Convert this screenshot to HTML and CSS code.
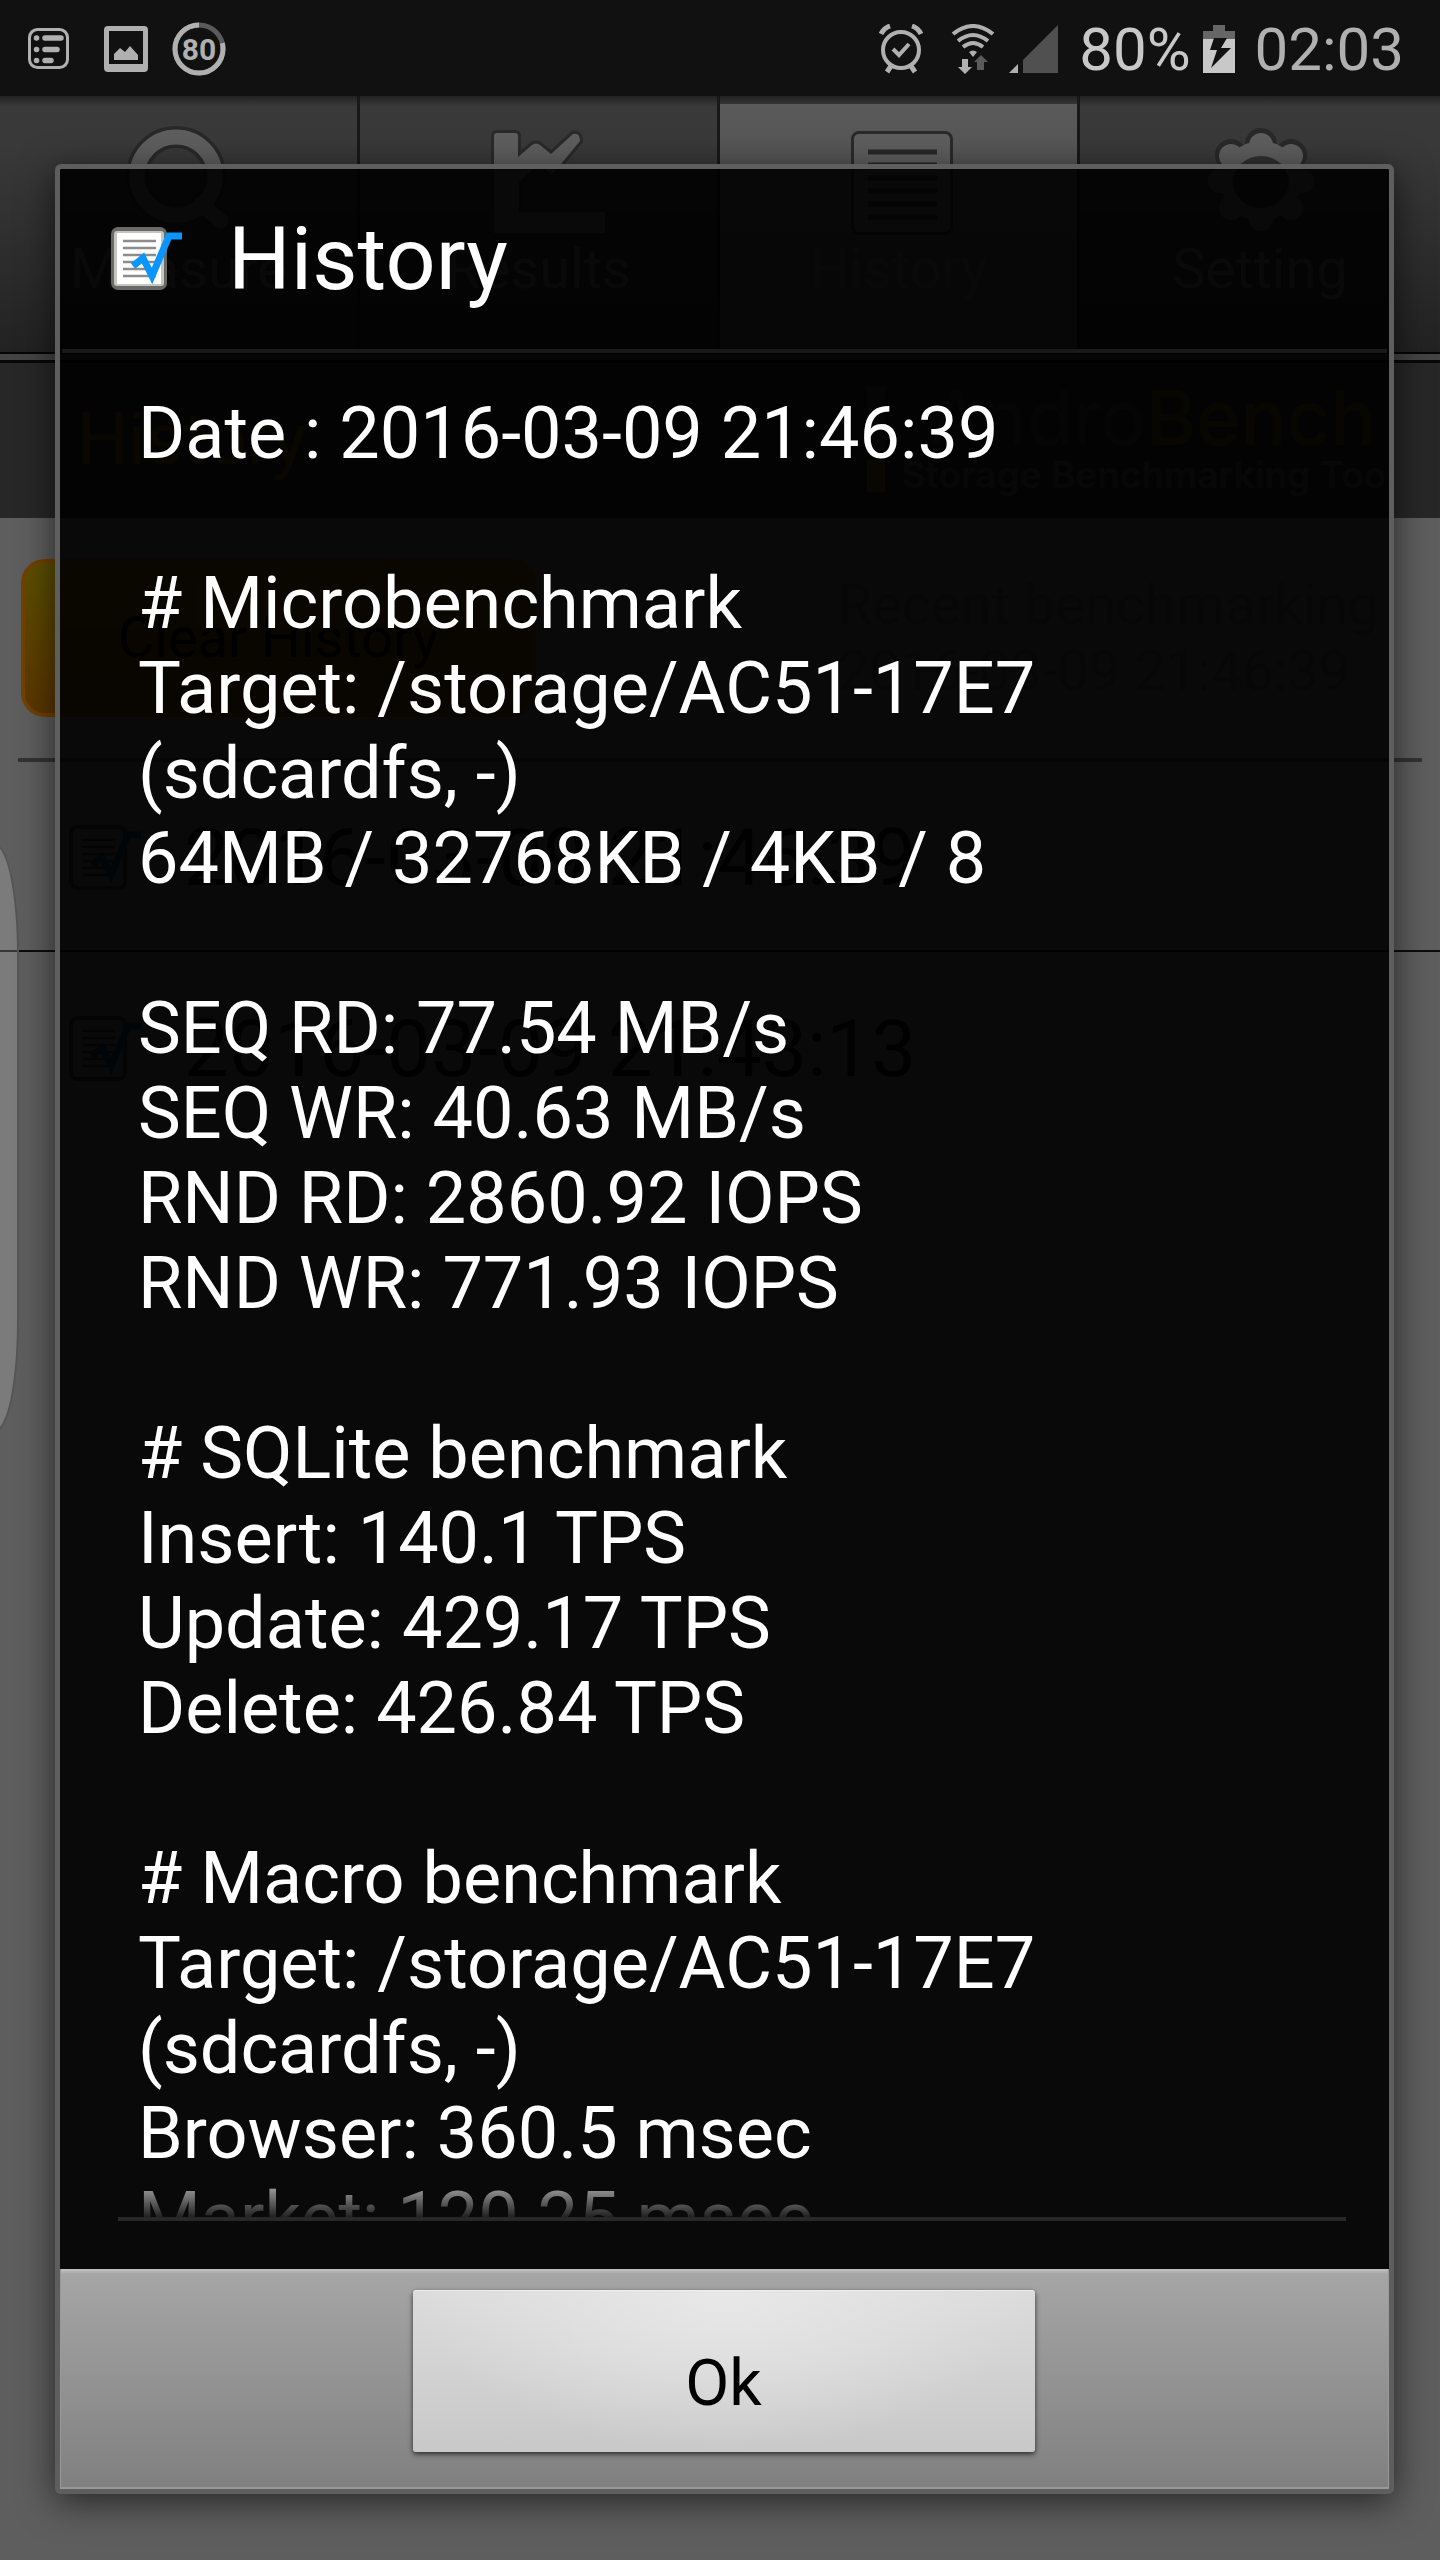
FILE: index.html
```
<!DOCTYPE html>
<html lang="en">
<head>
    <meta charset="UTF-8">
    <meta name="viewport" content="width=device-width, initial-scale=1.0">
    <title>AndroBench - History</title>
    <link rel="stylesheet" href="styles.css">
</head>
<body>
    <!-- shared icon: report sheet with tick -->
    <svg class="defs" width="0" height="0" aria-hidden="true">
        <symbol id="report" viewBox="0 0 72 66">
            <rect x="1" y="1" width="56" height="63" rx="7" fill="#6b6963"/>
            <rect x="4" y="5" width="50" height="55" rx="3" fill="#c4c4c4"/>
            <rect x="7" y="7" width="44" height="51" fill="#fff"/>
            <path d="M13 15h33M13 22h33M13 29h33M13 36h33M13 43h33M13 50h33" stroke="#8c8c8c" stroke-width="2.5"/>
            <path d="M23 40l10-8 9 18 17-40h13" fill="none" stroke="#0a95ff" stroke-width="7"/>
        </symbol>
        <symbol id="report-dim" viewBox="0 0 72 66">
            <rect x="2" y="2" width="54" height="61" rx="6" fill="#5e5e5e" stroke="#2c2c2c" stroke-width="4"/>
            <path d="M13 15h33M13 22h33M13 29h33M13 36h33M13 43h33M13 50h33" stroke="#303030" stroke-width="2.5"/>
            <path d="M23 40l10-8 9 18 17-40h13" fill="none" stroke="#00365c" stroke-width="7"/>
        </symbol>
    </svg>

    <header class="status-bar">
        <div class="status-left">
            <svg width="42" height="42" viewBox="0 0 42 42">
                <rect x="1.500" y="1.500" width="38" height="38" rx="8" fill="none" stroke="#b0b0b0" stroke-width="3"/>
                <g stroke="#b0b0b0" stroke-width="5.500" stroke-linecap="round">
                    <path d="M8.500 10h.1M17 10h16M8.500 21.500h.1M17 21.500h12M8.500 32.500h.1M17 32.500h6"/>
                </g>
            </svg>
            <svg width="44" height="46" viewBox="0 0 44 46">
                <path fill="#b0b0b0" fill-rule="evenodd" d="M4 0h36a4 4 0 0 1 4 4v38a4 4 0 0 1-4 4H4a4 4 0 0 1-4-4V4a4 4 0 0 1 4-4zM5 5v33h34V5z"/>
                <path fill="#b0b0b0" d="M10 34v-6l6-6 5 4 5-6 8 9v5z"/>
            </svg>
            <svg width="54" height="54" viewBox="0 0 54 54">
                <circle cx="27" cy="27" r="24" fill="none" stroke="#5a5a5a" stroke-width="5"/>
                <circle cx="27" cy="27" r="24" fill="none" stroke="#b0b0b0" stroke-width="5" pathLength="100" stroke-dasharray="79 21" stroke-dashoffset="-21" transform="rotate(-90 27 27)"/>
                <text x="27" y="38" class="ring-text">80</text>
            </svg>
        </div>
        <div class="status-right">
            <svg class="alarm" width="44" height="50" viewBox="0 0 44 50">
                <g fill="none" stroke="#b0b0b0">
                    <circle cx="22" cy="26" r="18" stroke-width="4"/>
                    <path d="M14 25l6 6 10-11" stroke-width="4"/>
                    <path d="M2 10q3-6 9-8M42 10q-3-6-9-8M12 42l-4 6M32 42l4 6" stroke-width="5"/>
                </g>
            </svg>
            <svg class="wifi" width="44" height="50" viewBox="0 0 44 50">
                <g fill="none" stroke="#b0b0b0" stroke-width="4">
                    <path d="M2 10q20-16 40 0M7 17q15-12 30 0M12 23q10-8 20 0"/>
                </g>
                <path d="M18 28q4-3 8 0l-4 5z" fill="#b0b0b0"/>
                <path d="M11 35h6v8h4l-7 7-7-7h4z" fill="#b0b0b0"/>
                <path d="M26 46h7v-8h4l-7-7-7 7h3z" fill="#5a5a5a"/>
            </svg>
            <svg class="signal" width="50" height="50" viewBox="0 0 50 50">
                <path d="M49 1v48H14V36z" fill="#505050"/>
                <path d="M9 40v9H0z" fill="#b0b0b0"/>
            </svg>
            <span class="percent">80%</span>
            <svg class="battery" width="32" height="50" viewBox="0 0 32 50">
                <path d="M10 1h12v6h10v8H0V7h10z" fill="#666"/>
                <path d="M0 15h32v34H0z" fill="#c8c8c8"/>
                <path d="M11 14h13l-6 10h10L8 44l6-18H7z" fill="#111"/>
            </svg>
            <time class="clock">02:03</time>
        </div>
    </header>

    <nav class="tabs">
        <button class="tab">
            <svg width="140" height="110" viewBox="0 0 140 110">
                <g class="icon-edge"><circle cx="67" cy="50" r="39"/><path d="M92 78l20 17"/></g>
                <g class="icon-line"><circle cx="67" cy="50" r="39"/><path d="M92 78l20 17"/></g>
            </svg>
            <span>Measure</span>
        </button>
        <button class="tab">
            <svg width="140" height="110" viewBox="0 0 140 110">
                <path class="icon-fill" d="M25 10q0-3 3-3h18q3 0 3 3v21l14-12q4-3 8 0l11 9 22-20q7-2 7 7L83 49 70 38 50 56v30h86v21H25z"/>
            </svg>
            <span>Results</span>
        </button>
        <button class="tab tab-active">
            <svg width="140" height="110" viewBox="0 0 140 110">
                <rect class="icon-fill" x="25" y="8" width="96" height="98" rx="5"/>
                <path d="M39 26h69M39 39h69M39 52h69M39 65h69M39 78h69M39 91h69" stroke="#282828" stroke-width="5"/>
            </svg>
            <span>History</span>
        </button>
        <button class="tab">
            <svg width="140" height="110" viewBox="0 0 140 110">
                <g class="icon-edge gear"><circle cx="71" cy="55" r="34"/><circle cx="71" cy="18" r="11"/><circle cx="101" cy="29" r="11"/><circle cx="41" cy="29" r="11"/></g>
                <g class="gear-fill">
                    <circle cx="71" cy="55" r="40"/>
                    <circle cx="71" cy="19" r="12"/><circle cx="101" cy="30" r="12"/><circle cx="112" cy="55" r="12"/><circle cx="101" cy="82" r="12"/>
                    <circle cx="71" cy="93" r="12"/><circle cx="41" cy="82" r="12"/><circle cx="30" cy="55" r="12"/><circle cx="41" cy="30" r="12"/>
                </g>
                <ellipse cx="71" cy="56" rx="28" ry="26" fill="#303030"/>
            </svg>
            <span>Setting</span>
        </button>
    </nav>

    <main class="page">
        <div class="page-head">
            <h1>History</h1>
            <div class="logo">
                <svg width="18" height="106" viewBox="0 0 18 106">
                    <path d="M0 0h18v68H0z" fill="#383838"/>
                    <path d="M0 74h18v32H0z" fill="#5e4600"/>
                </svg>
                <div>
                    <div class="logo-name">Andro<b>Bench</b></div>
                    <div class="logo-sub">Storage Benchmarking Tool</div>
                </div>
            </div>
        </div>
        <div class="toolbar">
            <button class="clear">Clear History</button>
            <p class="recent">Recent benchmarking<br>2016-03-09 21:46:39</p>
        </div>
        <ul class="runs">
            <li><svg width="72" height="66"><use href="#report-dim"/></svg>2016-03-09 21:46:39</li>
            <li><svg width="72" height="66"><use href="#report-dim"/></svg>2016-03-09 21:43:13</li>
        </ul>
    </main>

    <div class="edge-handle"></div>

    <div class="overlay">
        <section class="dialog" role="dialog" aria-labelledby="dialogTitle">
            <div class="dialog-title">
                <svg width="72" height="66"><use href="#report"/></svg>
                <h2 id="dialogTitle">History</h2>
            </div>
            <div class="dialog-body">
                <div class="report-text">Date : 2016-03-09 21:46:39

# Microbenchmark
Target: /storage/AC51-17E7 (sdcardfs, -)
64MB / 32768KB / 4KB / 8

SEQ RD: 77.54 MB/s
SEQ WR: 40.63 MB/s
RND RD: 2860.92 IOPS
RND WR: 771.93 IOPS

# SQLite benchmark
Insert: 140.1 TPS
Update: 429.17 TPS
Delete: 426.84 TPS

# Macro benchmark
Target: /storage/AC51-17E7 (sdcardfs, -)
Browser: 360.5 msec
Market: 120.25 msec</div>
            </div>
            <div class="dialog-buttons">
                <button class="ok">Ok</button>
            </div>
        </section>
    </div>
</body>
</html>
```
FILE: styles.css
```
* {
    box-sizing: border-box;
}

body {
    margin: 0;
    height: 100vh;
    overflow: hidden;
    position: relative;
    background: #5e5e5e;
    color: #000;
    font-family: Roboto, sans-serif;
}

button {
    border: 0;
    font-family: inherit;
    color: inherit;
}

svg {
    flex: none;
}

.defs {
    position: absolute;
}

/* status bar */
.status-bar {
    display: flex;
    justify-content: space-between;
    align-items: center;
    height: 96px;
    padding: 2px 36px 0 28px;
    background: #111;
}

.status-left,
.status-right {
    display: flex;
    align-items: center;
}

.status-left svg {
    margin-right: 24px;
}

.status-left svg:first-child {
    margin-right: 34px;
}

.ring-text {
    font-size: 30px;
    font-weight: 700;
    text-anchor: middle;
    fill: #b0b0b0;
}

.status-right {
    font-size: 60px;
    line-height: 70px;
    color: #b0b0b0;
}

.alarm {
    margin-right: 28px;
}

.wifi {
    margin-right: 14px;
}

.signal {
    margin-right: 20px;
}

.percent,
.clock {
    padding-top: 2px;
}

.percent {
    color: #c8c8c8;
}

.battery {
    margin: 0 20px 0 12px;
}

/* tabs */
.tabs {
    display: grid;
    grid-template-columns: repeat(4, 1fr);
    background: linear-gradient(#222 0, #393939 10px, #393939 50px, #222 100%);
    border-bottom: 2px solid #050505;
}

.tab {
    display: flex;
    flex-direction: column;
    align-items: center;
    padding: 30px 0 50px;
    background: none;
    border-right: 3px solid #181818;
    font-size: 56px;
    line-height: 66px;
    color: #5a5a5a;
}

.tab:last-child {
    border-right: 0;
}

.tab-active {
    background: linear-gradient(transparent 8px, #5a5a5a 8px, #444);
    color: #606060;
}

.icon-edge,
.icon-line {
    fill: none;
    stroke: #292929;
    stroke-width: 22;
    stroke-linecap: round;
}

.icon-line {
    stroke: #5e5e5e;
    stroke-width: 15;
}

.icon-fill {
    fill: #5e5e5e;
    stroke: #2a2a2a;
    stroke-width: 6;
    paint-order: stroke;
}

.gear {
    stroke-width: 10;
}

.gear-fill {
    fill: #5e5e5e;
}

/* page behind the dialog */
.page-head {
    display: flex;
    justify-content: space-between;
    align-items: center;
    height: 164px;
    padding: 0 44px 0 77px;
    background: #272727;
    border-top: 6px solid #444;
    box-shadow: inset 0 3px #080808;
}

.page-head h1 {
    margin: 0;
    font-size: 72px;
    font-weight: 400;
    color: #5e4600;
}

.logo {
    display: flex;
    align-items: center;
    gap: 17px;
    font-family: Inter, sans-serif;
    text-align: right;
    color: #484848;
}

.logo-name {
    padding-right: 20px;
    font-size: 76px;
    line-height: 72px;
    color: #353535;
}

.logo-name b {
    font-weight: 500;
    color: #504000;
}

.logo-sub {
    font-size: 37px;
    line-height: 44px;
    font-weight: 600;
}

.toolbar {
    display: flex;
    justify-content: space-between;
    align-items: center;
    margin: 0 18px;
    padding: 41px 43px 41px 3px;
    border-bottom: 4px solid #333;
}

.clear {
    width: 515px;
    height: 158px;
    border: 4px solid #704200;
    border-radius: 24px;
    background: linear-gradient(#5c5000, #5c3600);
    font-size: 56px;
}

.recent {
    margin: 0;
    font-size: 56px;
    line-height: 66px;
    color: #464646;
}

.runs {
    list-style: none;
    margin: 0;
    padding: 0;
}

.runs li {
    display: flex;
    align-items: center;
    gap: 43px;
    height: 190px;
    padding: 3px 0 0 69px;
    border-bottom: 2px solid #0c0c0c;
    font-size: 80px;
    color: #101010;
}

.runs li:last-child {
    border-bottom: 0;
}

.edge-handle {
    position: absolute;
    left: -6px;
    top: 844px;
    width: 25px;
    height: 588px;
    border: 2px solid #555;
    border-radius: 0 24px 24px 0 / 0 110px 110px 0;
    background: rgba(255, 255, 255, .18);
}

/* dialog */
.overlay {
    position: absolute;
    inset: 96px 0 0;
    display: flex;
    padding: 68px 46px 66px 55px;
}

.dialog {
    flex: 1;
    display: flex;
    flex-direction: column;
    min-height: 0;
    border: 5px solid #5e5e5e;
    border-radius: 6px;
    background: rgba(0, 0, 0, .9);
    background-clip: padding-box;
    box-shadow: 0 8px 36px rgba(0, 0, 0, .6);
}

.dialog-title {
    display: flex;
    align-items: center;
    gap: 46px;
    height: 184px;
    margin: 0 2px;
    padding: 0 48px;
    border-bottom: 4px solid #191919;
    color: #fff;
}

.dialog-title h2 {
    margin: 0;
    font-size: 88px;
    line-height: 104px;
    font-weight: 400;
}

.dialog-body {
    flex: 1;
    min-height: 0;
    position: relative;
    margin: 0 43px 48px 58px;
    overflow: hidden;
}

/* fading edge at the bottom of the scroller */
.dialog-body::after {
    content: "";
    position: absolute;
    inset: auto 0 0;
    height: 54px;
    border-bottom: 4px solid #282828;
    background: linear-gradient(rgba(9, 9, 9, 0), rgba(9, 9, 9, .9));
}

.report-text {
    padding: 38px 20px 0;
    font-size: 72px;
    line-height: 85px;
    white-space: pre-line;
    color: #fff;
}

.dialog-buttons {
    height: 220px;
    padding: 21px 2px 0 0;
    text-align: center;
    background: linear-gradient(#c4c4c4 0, #a5a5a5 5px, #a3a3a3 20px, #808080 100%);
    border: solid #999;
    border-width: 0 1px 2px;
}

.ok {
    width: 622px;
    height: 162px;
    padding: 24px 0 0;
    border-radius: 3px;
    background: radial-gradient(ellipse at top, #e8e8e8, rgba(232, 232, 232, 0) 70%), linear-gradient(#dcdcdc, #c8c8c8);
    box-shadow: 0 2px 5px rgba(0, 0, 0, .7), inset 0 1px #eee;
    font-size: 64px;
}
```
